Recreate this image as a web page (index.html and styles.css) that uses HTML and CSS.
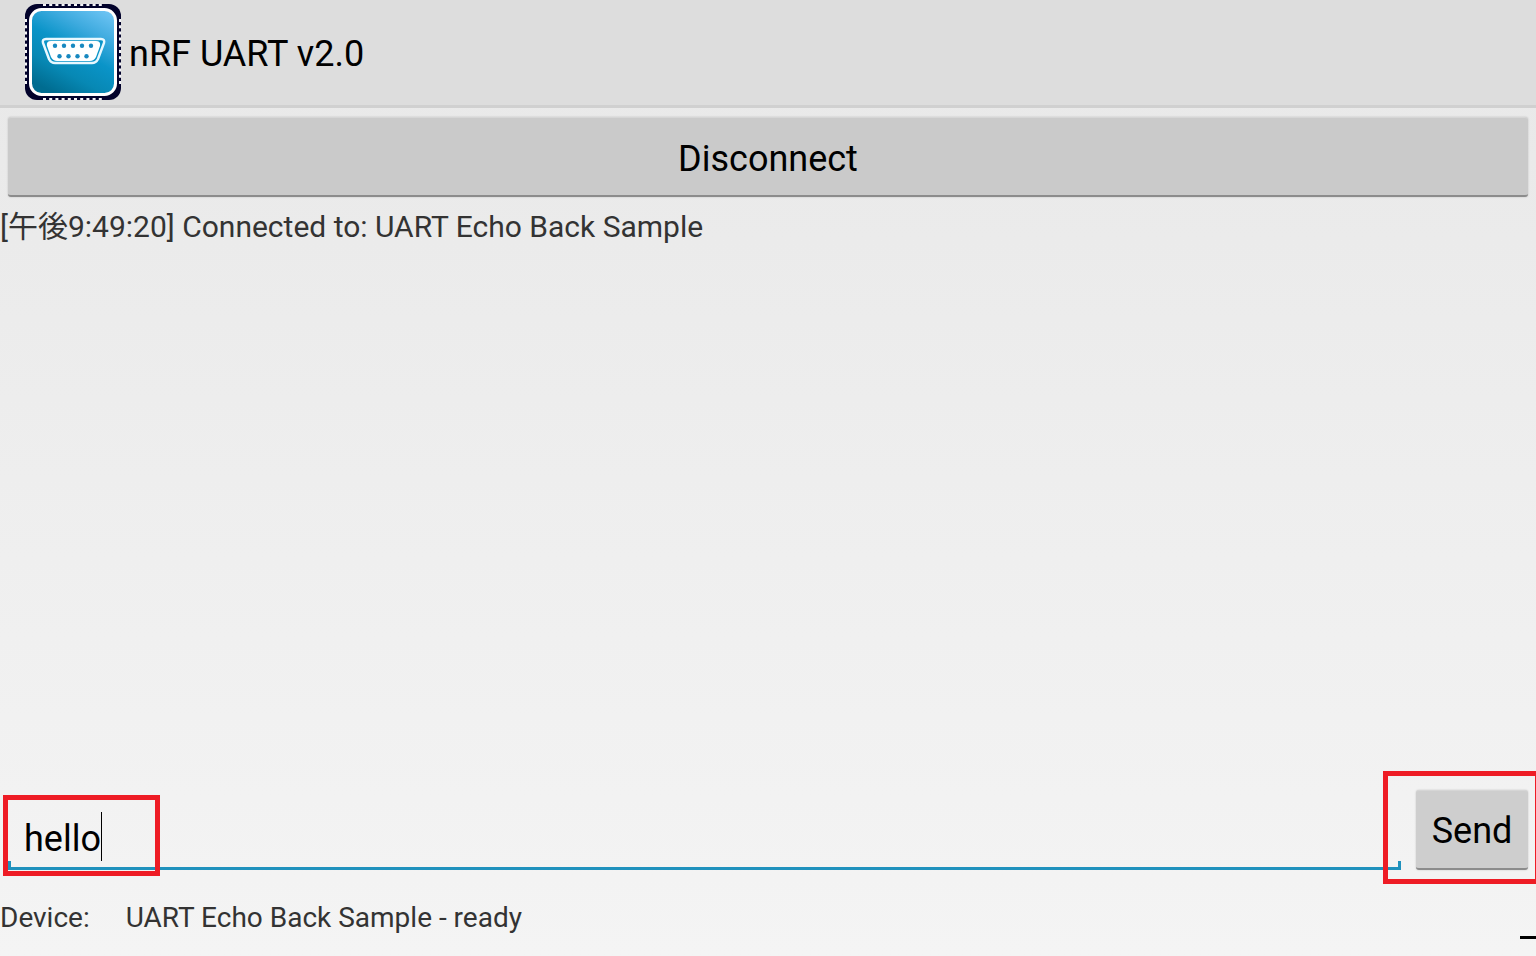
FILE: index.html
```html
<!DOCTYPE html>
<html lang="en">
<head>
<meta charset="utf-8">
<title>nRF UART v2.0</title>
<link rel="stylesheet" href="styles.css">
</head>
<body>
<div class="app">
  <header class="bar">
    <svg class="logo" viewBox="0 0 96 96" aria-hidden="true">
      <defs>
        <linearGradient id="face" x1="0.85" y1="0" x2="0.3" y2="1">
          <stop offset="0" stop-color="#6cc3f3"/>
          <stop offset="0.25" stop-color="#3fabdf"/>
          <stop offset="0.5" stop-color="#0a94c8"/>
          <stop offset="0.75" stop-color="#0788b4"/>
          <stop offset="1" stop-color="#006c90"/>
        </linearGradient>
      </defs>
      <rect width="96" height="96" rx="12" fill="#02022b"/>
      <g fill="none" stroke="#f4f4f8" stroke-width="2" stroke-dasharray="3 3.2">
        <path d="M18 1H80M18 95H80M1 15V80M95 15V80"/>
      </g>
      <rect x="5.500" y="5.500" width="85" height="85" rx="11" fill="url(#face)" stroke="#fff" stroke-width="3"/>
      <path d="M21 35H76Q80 35 79 39L73 55Q71 59 67 59H30Q26 59 24 55L18 39Q17 35 21 35Z" fill="#0a94c8" stroke="#e8f8ff" stroke-width="2.500"/>
      <path d="M26 37H71Q76 37 75 42L71 53Q69 57 65 57H32Q28 57 26 53L22 42Q21 37 26 37Z" fill="#fff"/>
      <g fill="#1788c0">
        <circle cx="30" cy="41.700" r="2.200"/><circle cx="39" cy="41.700" r="2.200"/><circle cx="48" cy="41.700" r="2.200"/><circle cx="57" cy="41.700" r="2.200"/><circle cx="66" cy="41.700" r="2.200"/>
        <circle cx="34.500" cy="52.300" r="2.200"/><circle cx="43.500" cy="52.300" r="2.200"/><circle cx="52.500" cy="52.300" r="2.200"/><circle cx="61.500" cy="52.300" r="2.200"/>
      </g>
    </svg>
    <h1 class="title">nRF UART v2.0</h1>
  </header>
  <main class="content">
    <button class="btn btn-wide" type="button">Disconnect</button>
    <div class="log">[午後9:49:20] Connected to: UART Echo Back Sample</div>
    <form class="composer">
      <div class="field">
        <input class="message" type="text" value="hello" aria-label="Message">
        <span class="caret"></span>
        <span class="mark mark-field"></span>
      </div>
      <div class="send">
        <button class="btn btn-send" type="button">Send</button>
        <span class="mark mark-send"></span>
      </div>
    </form>
  </main>
  <footer class="status">
    <span class="status-label">Device:</span>
    <span>UART Echo Back Sample - ready</span>
    <span class="dash"></span>
  </footer>
</div>
</body>
</html>
```
FILE: styles.css
```css
* {
  box-sizing: border-box;
}

body {
  margin: 0;
  font-family: Roboto, "Noto Sans CJK JP", sans-serif;
  color: #333;
}

.app {
  display: flex;
  flex-direction: column;
  min-height: 100vh;
  overflow: hidden;
  background: linear-gradient(#e8e8e8, #f4f4f4);
}

.bar {
  display: flex;
  align-items: center;
  gap: 8px;
  height: 108px;
  padding: 0 25px 1px;
  background: #ddd;
  border-bottom: 3px solid #d0d0d0;
}

.logo {
  width: 96px;
  height: 96px;
}

.title {
  margin: 0;
  padding-top: 4px;
  font-size: 36px;
  font-weight: 400;
  line-height: 42px;
  color: #000;
}

.content {
  display: flex;
  flex: 1;
  flex-direction: column;
}

.btn {
  height: 80px;
  padding: 4px 0 0;
  border: 0;
  border-top: 1px solid #d6d6d6;
  border-bottom: 2px solid #8c8c8c;
  border-radius: 3px;
  background: #cacaca;
  box-shadow: 0 0 2px rgba(0, 0, 0, 0.2);
  font: 36px/42px Roboto, sans-serif;
  color: #000;
}

.btn-wide {
  margin: 9px 8px 0;
}

.log {
  flex: 1;
  margin-top: 9px;
  font-size: 30px;
  line-height: 42px;
}

.composer {
  display: flex;
  align-items: flex-end;
  gap: 15px;
  padding: 0 8px;
}

.field {
  position: relative;
  flex: 1;
}

.field::before,
.field::after {
  content: "";
  position: absolute;
  bottom: 0;
  width: 3px;
  height: 9px;
  background: #1f91bd;
}

.field::before {
  left: 0;
}

.field::after {
  right: 0;
}

.message {
  display: block;
  width: 100%;
  height: 64px;
  padding: 4px 16px 0;
  border: 0;
  border-bottom: 3px solid #1f91bd;
  outline: 0;
  background: transparent;
  font: 36px/42px Roboto, sans-serif;
  color: #000;
}

.caret {
  position: absolute;
  left: 93px;
  bottom: 9px;
  width: 1px;
  height: 49px;
  background: #000;
}

.send {
  position: relative;
}

.btn-send {
  display: block;
  width: 112px;
  padding-top: 2px;
  background: #cecece;
}

.mark {
  position: absolute;
  border: 5px solid #ee1c25;
  pointer-events: none;
}

.mark-field {
  left: -5px;
  bottom: -6px;
  z-index: 1;
  width: 157px;
  height: 81px;
}

.mark-send {
  left: -33px;
  bottom: -14px;
  width: 157px;
  height: 113px;
}

.status {
  position: relative;
  display: flex;
  align-items: center;
  gap: 36px;
  height: 86px;
  padding-top: 10px;
  font-size: 28px;
  line-height: 32px;
}

.dash {
  position: absolute;
  right: 0;
  bottom: 17px;
  width: 16px;
  height: 3px;
  background: #000;
}
```
